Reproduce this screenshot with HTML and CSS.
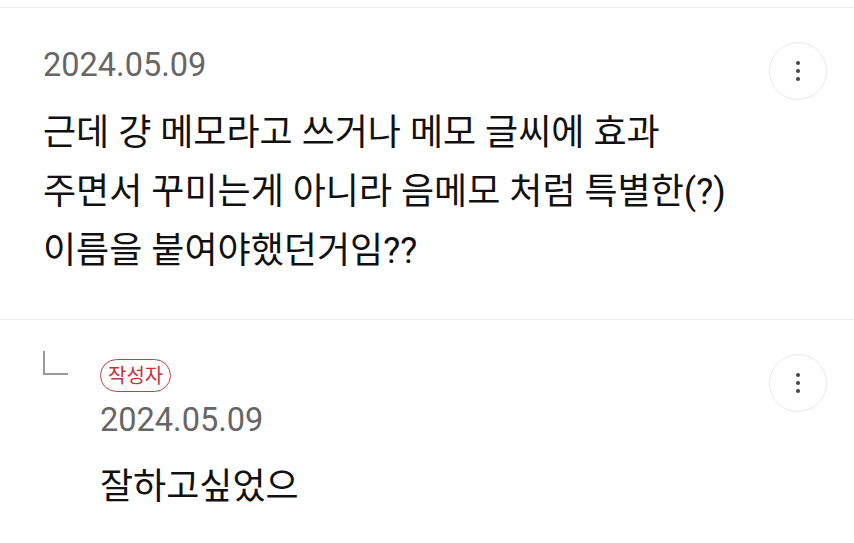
FILE: index.html
```html
<!DOCTYPE html>
<html lang="ko">
<head>
<meta charset="utf-8">
<link rel="stylesheet" href="styles.css">
</head>
<body>
<div class="list">
  <div class="comment">
    <div class="body">
      <div class="date">2024.05.09</div>
      <p class="text">근데 걍 메모라고 쓰거나 메모 글씨에 효과<br>주면서 꾸미는게 아니라 음메모 처럼 특별한(?)<br>이름을 붙여야했던거임??</p>
    </div>
    <button class="more" aria-label="더보기"><span></span><span></span><span></span></button>
  </div>
  <div class="comment reply">
    <div class="reply-mark"><svg width="25" height="24" viewBox="0 0 25 24"><path d="M1 0 V23 H25" fill="none" stroke="#9a9a9a" stroke-width="2"/></svg></div>
    <div class="body">
      <span class="badge">작성자</span>
      <div class="date">2024.05.09</div>
      <p class="text reply-text">잘하고싶었으</p>
    </div>
    <button class="more" aria-label="더보기"><span></span><span></span><span></span></button>
  </div>
</div>
</body>
</html>
```

FILE: styles.css
```css
html, body {
  margin: 0;
  padding: 0;
  background: #fff;
}
body {
  font-family: Roboto, "Noto Sans CJK KR", sans-serif;
  color: #111;
}
.list {
  padding-top: 7px;
}
.comment {
  display: flex;
  align-items: flex-start;
  border-top: 1px solid #ececec;
  padding: 34px 27px 38px 43px;
}
.body {
  flex: 1;
  display: flex;
  flex-direction: column;
  align-items: flex-start;
}
.date {
  font-family: Roboto, sans-serif;
  font-size: 32.5px;
  line-height: 40px;
  color: #666;
  margin-top: 3px;
}
.text {
  margin: 19px 0 0;
  font-size: 36px;
  line-height: 59px;
  color: #111;
}
.more {
  width: 58px;
  height: 58px;
  border-radius: 50%;
  border: 1.5px solid #e8e8e8;
  background: #fff;
  padding: 0;
  display: flex;
  flex-direction: column;
  align-items: center;
  justify-content: center;
  gap: 3.5px;
  flex: none;
}
.more span {
  width: 4.5px;
  height: 4.5px;
  border-radius: 50%;
  background: #444;
}
.reply {
  padding-top: 34px;
  padding-bottom: 20px;
}
.reply-mark {
  width: 57px;
  flex: none;
  margin-top: -3px;
}
.reply-mark svg {
  display: block;
}
.badge {
  margin-top: 5px;
  height: 33px;
  box-sizing: border-box;
  border: 1.5px solid #cc3a44;
  border-radius: 17px;
  padding: 0 7px;
  font-family: "Noto Sans CJK KR", sans-serif;
  font-size: 20px;
  line-height: 29px;
  color: #c8323d;
}
.reply .date {
  margin-top: 8px;
}
.reply-text {
  margin-top: 18px;
}
```
